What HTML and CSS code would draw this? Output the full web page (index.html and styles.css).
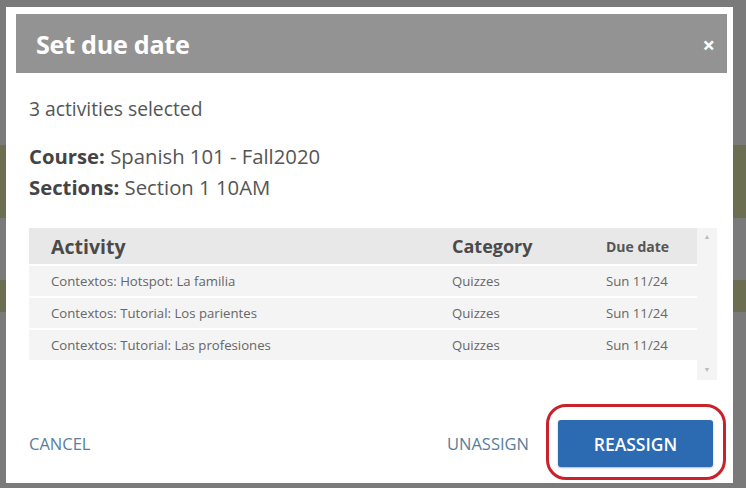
FILE: index.html
```html
<!DOCTYPE html>
<html>
<head>
<meta charset="utf-8">
<link rel="stylesheet" href="styles.css">
</head>
<body>
<div class="dialog">
  <div class="header">
    <span class="title">Set due date</span>
    <span class="close">×</span>
  </div>
  <div class="body">
    <p class="count">3 activities selected</p>
    <div class="meta">
      <div><b>Course:</b> Spanish 101 - Fall2020</div>
      <div><b>Sections:</b> Section 1 10AM</div>
    </div>
    <div class="tablewrap">
      <div class="table">
        <div class="row head">
          <span class="c-act">Activity</span>
          <span class="c-cat">Category</span>
          <span class="c-due">Due date</span>
        </div>
        <div class="row">
          <span class="c-act">Contextos: Hotspot: La familia</span>
          <span class="c-cat">Quizzes</span>
          <span class="c-due">Sun 11/24</span>
        </div>
        <div class="row">
          <span class="c-act">Contextos: Tutorial: Los parientes</span>
          <span class="c-cat">Quizzes</span>
          <span class="c-due">Sun 11/24</span>
        </div>
        <div class="row">
          <span class="c-act">Contextos: Tutorial: Las profesiones</span>
          <span class="c-cat">Quizzes</span>
          <span class="c-due">Sun 11/24</span>
        </div>
      </div>
      <div class="scrollbar">
        <span class="arrow">▲</span>
        <span class="arrow">▼</span>
      </div>
    </div>
  </div>
  <div class="footer">
    <span class="link">CANCEL</span>
    <div class="actions">
      <span class="link">UNASSIGN</span>
      <div class="btnwrap">
        <span class="btn">REASSIGN</span>
        <span class="ring"></span>
      </div>
    </div>
  </div>
</div>
</body>
</html>
```
FILE: styles.css
```css
html, body {
  margin: 0;
  padding: 0;
}
body {
  width: 746px;
  height: 488px;
  overflow: hidden;
  font-family: "Open Sans", "Noto Sans", sans-serif;
  background:
    linear-gradient(to bottom,
      #7a7a7a 0, #7a7a7a 145px,
      #6c6e52 145px, #6c6e52 218px,
      #7a7a7a 218px, #7a7a7a 280px,
      #6c6e52 280px, #6c6e52 312px,
      #7a7a7a 312px);
  padding-top: 7px;
  box-sizing: border-box;
}
.dialog {
  margin: 0 13px 0 6px;
  height: 476px;
  background: #fff;
  display: flex;
  flex-direction: column;
  padding: 7px 6px 0 10px;
  box-sizing: border-box;
}
.header {
  height: 59px;
  background: #939393;
  display: flex;
  align-items: center;
  justify-content: space-between;
  padding: 0 12px 0 20px;
  color: #fff;
}
.title {
  font-weight: 700;
  font-size: 25.2px;
  letter-spacing: -0.3px;
}
.close {
  font-weight: 700;
  font-size: 22px;
  line-height: 1;
}
.body {
  padding: 0 0 0 13px;
  color: #555;
}
.count {
  margin: 24px 0 0 0;
  font-size: 19.3px;
  line-height: 24px;
}
.meta {
  margin-top: 20px;
  font-size: 20.3px;
  line-height: 31px;
}
.meta b {
  color: #444;
}
.tablewrap {
  margin-top: 25px;
  display: flex;
  width: 688px;
  height: 152px;
}
.table {
  flex: 1;
  display: flex;
  flex-direction: column;
  gap: 2px;
}
.row {
  display: flex;
  align-items: center;
  height: 30px;
  background: #f4f4f4;
  font-size: 13.2px;
  color: #666;
}
.row.head {
  height: 36px;
  background: #e8e8e8;
  color: #4a4a4a;
  font-weight: 700;
  font-size: 18px;
}
.row.head .c-act {
  font-size: 19.5px;
}
.c-act {
  padding-left: 22px;
  width: 401px;
}
.c-cat {
  width: 154px;
}
.row.head .c-due {
  font-size: 14px;
  color: #555;
}
.scrollbar {
  width: 20px;
  background: #f4f4f4;
  display: flex;
  flex-direction: column;
  justify-content: space-between;
  align-items: center;
  padding: 4px 0 6px;
  box-sizing: border-box;
}
.arrow {
  font-size: 7px;
  color: #bbb;
}
.footer {
  flex: 1;
  display: flex;
  justify-content: space-between;
  align-items: flex-start;
  padding: 40px 14px 0 13px;
}
.footer > .link {
  line-height: 47px;
}
.link {
  font-size: 16.5px;
  color: #5a7d9c;
}
.actions {
  display: flex;
  align-items: center;
  gap: 29px;
}
.btnwrap {
  position: relative;
}
.btn {
  display: flex;
  align-items: center;
  justify-content: center;
  width: 155px;
  height: 47px;
  background: #2c6ab2;
  color: #fff;
  font-weight: 600;
  font-size: 17.5px;
  border-radius: 3px;
  box-shadow: 0 1px 2px rgba(0,0,0,0.3);
}
.ring {
  position: absolute;
  left: -12px;
  top: -16px;
  width: 180px;
  height: 76px;
  border: 3.5px solid #c9222b;
  border-radius: 20px;
  box-sizing: border-box;
  pointer-events: none;
}
```
